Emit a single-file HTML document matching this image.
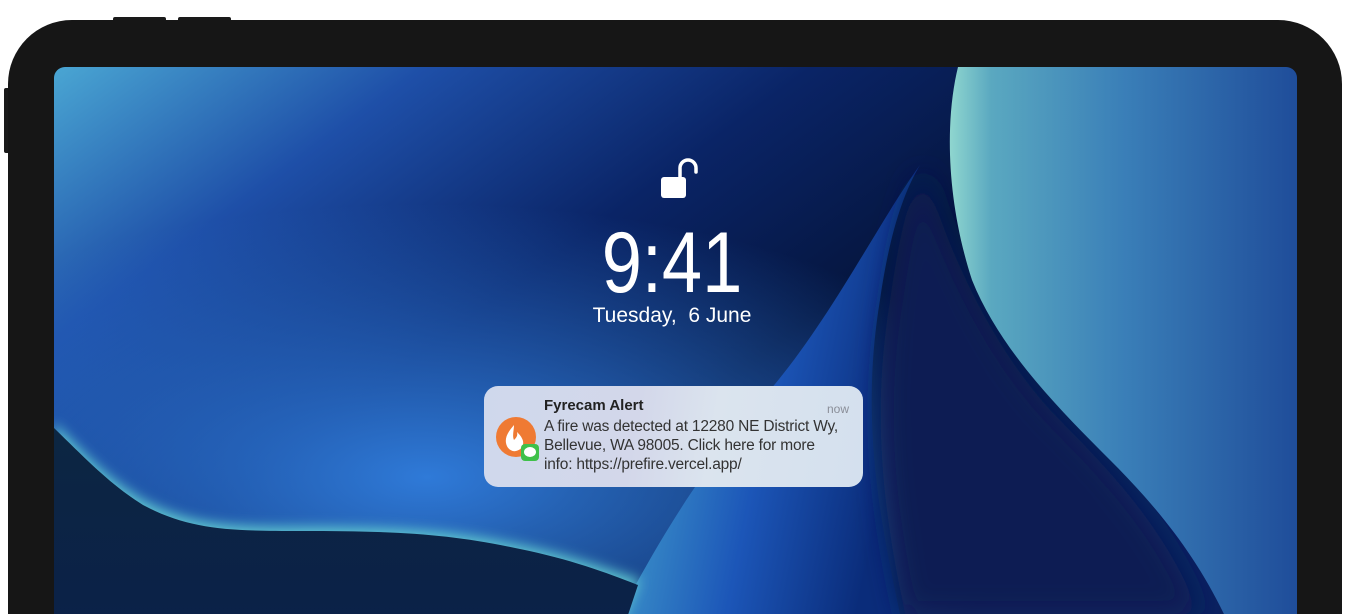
<!DOCTYPE html>
<html><head><meta charset="utf-8"><style>
html,body{margin:0;padding:0;background:#fff;width:1364px;height:614px;overflow:hidden;position:relative;font-family:"Liberation Sans",sans-serif}
.btn{position:absolute;background:#1a1a1a;border-radius:2px}
.frame{position:absolute;left:8px;top:20px;width:1334px;height:594px;background:#161616;border-radius:64px 64px 0 0}
.screen{position:absolute;left:54px;top:67px;width:1243px;height:547px;border-radius:11px 11px 0 0;overflow:hidden}
.time{position:absolute;left:572px;width:200px;text-align:center;color:#fff;white-space:nowrap}
.note{position:absolute;left:484px;top:386px;width:379px;height:101px;border-radius:14px;background:linear-gradient(100deg,#cfd8ec 0%,#d3d7ea 40%,#dbe4ee 60%,#d4e0ee 100%);}
.note .t{position:absolute;left:60px;top:11px;font-size:15px;font-weight:bold;color:#222;}
.note .now{position:absolute;right:14px;top:16px;font-size:12px;color:#8a8e98}
.note .b{position:absolute;left:60px;top:31px;font-size:15.5px;line-height:19px;color:#333;width:300px;letter-spacing:-0.2px}
</style></head><body>
<div class="btn" style="left:113px;top:17px;width:53px;height:5px"></div>
<div class="btn" style="left:178px;top:17px;width:53px;height:5px"></div>
<div class="btn" style="left:4px;top:88px;width:6px;height:65px"></div>
<div class="frame"></div>
<div class="screen">
<svg width="1243" height="547" viewBox="54 67 1243 547" xmlns="http://www.w3.org/2000/svg">
<defs>
<linearGradient id="bg" x1="0" y1="0" x2="1" y2="0.6">
<stop offset="0" stop-color="#4aa6d3"/><stop offset="0.22" stop-color="#1e4fa8"/><stop offset="0.45" stop-color="#0a2466"/><stop offset="0.65" stop-color="#051640"/><stop offset="1" stop-color="#0a2260"/></linearGradient>
<radialGradient id="blu" cx="0.3" cy="0.75" r="0.5"><stop offset="0" stop-color="#2f7ad8"/><stop offset="1" stop-color="#2f7ad8" stop-opacity="0"/></radialGradient>
<linearGradient id="rs" x1="0" y1="0" x2="1" y2="0"><stop offset="0" stop-color="#8fd6cf"/><stop offset="0.12" stop-color="#5aa8c0"/><stop offset="0.5" stop-color="#3a7fb8"/><stop offset="1" stop-color="#1f4d9a"/></linearGradient>
<linearGradient id="mb" x1="0" y1="0" x2="1" y2="0.3"><stop offset="0" stop-color="#7fd2cc"/><stop offset="0.25" stop-color="#3a8fc8"/><stop offset="0.6" stop-color="#1c56b8"/><stop offset="1" stop-color="#0a2c7a"/></linearGradient>
<linearGradient id="dk" x1="0" y1="0" x2="0" y2="1"><stop offset="0" stop-color="#0c2642"/><stop offset="1" stop-color="#0b2148"/></linearGradient>
<filter id="bl"><feGaussianBlur stdDeviation="6"/></filter>
<filter id="bl2"><feGaussianBlur stdDeviation="14"/></filter>
</defs>
<rect x="54" y="67" width="1243" height="547" fill="url(#bg)"/>
<rect x="54" y="67" width="1243" height="547" fill="url(#blu)"/>
<path d="M920,165 C880,220 830,320 770,390 C720,450 680,500 620,614 L900,614 C880,520 860,420 880,300 C890,230 905,190 920,165Z" fill="url(#mb)"/>
<path d="M905,614 C885,520 870,420 890,300 C900,230 910,190 925,170 C950,260 1000,360 1060,420 C1130,490 1170,540 1200,614Z" fill="#071c52" filter="url(#bl2)"/>
<path d="M958,67 C945,120 946,200 972,280 C1000,350 1060,410 1110,460 C1160,510 1200,560 1230,627 L1297,627 L1297,67Z" fill="url(#rs)"/>
<path d="M54,423 C90,460 110,480 143,500 C190,525 230,527 300,527 C400,527 450,530 520,545 C570,555 610,570 640,580 L620,627 L54,627Z" fill="#5fc6d0" filter="url(#bl)"/>
<path d="M54,428 C90,463 110,484 143,505 C190,530 230,531 300,531 C400,531 450,534 520,549 C570,559 610,574 638,585 L624,627 L54,627Z" fill="url(#dk)"/>
</svg>
</div>
<svg style="position:absolute;left:655px;top:155px" width="50" height="50" viewBox="655 155 50 50">
<rect x="661" y="177" width="25" height="21" rx="3" fill="#fff"/>
<path d="M680,178 V168 A8,8 0 0 1 696,168 V172" fill="none" stroke="#fff" stroke-width="3.5" stroke-linecap="round"/>
</svg>
<div class="time" style="top:214px;font-size:86px;font-weight:300;transform:scaleX(0.84);letter-spacing:0px">9:41</div>
<div class="time" style="top:304px;font-size:21px">Tuesday,&nbsp; 6 June</div>
<div class="note">
<svg style="position:absolute;left:8px;top:30px" width="50" height="50" viewBox="490 416 50 50">
<circle cx="514" cy="437" r="20" fill="#ef7a33"/>
<path d="M512,425 C506,432 503,437 504,443 C505,449 510,452 514,451 C519,450 522,446 521,441 C520,437 517,434 515,432 C516,436 514,438 512,440 C510,436 512,430 512,425Z" fill="#fff"/>
<rect x="519" y="444" width="18" height="17" rx="4" fill="#3fc04a"/>
<ellipse cx="528" cy="452" rx="6" ry="5" fill="#fff"/>
</svg>
<div class="t">Fyrecam Alert</div>
<div class="now">now</div>
<div class="b">A fire was detected at 12280 NE District Wy, Bellevue, WA 98005. Click here for more info: https://prefire.vercel.app/</div>
</div>
</body></html>
